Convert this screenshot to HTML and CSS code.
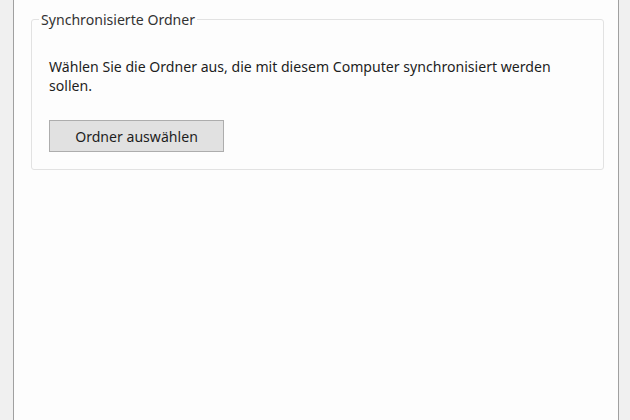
FILE: index.html
```html
<!DOCTYPE html>
<html lang="de">
<head>
<meta charset="utf-8">
<link rel="stylesheet" href="styles.css">
</head>
<body>
<div class="window">
  <div class="side side-left"></div>
  <main class="panel">
    <fieldset class="group">
      <legend class="legend">Synchronisierte Ordner</legend>
      <p class="desc">Wählen Sie die Ordner aus, die mit diesem Computer synchronisiert werden sollen.</p>
      <button class="btn" type="button">Ordner auswählen</button>
    </fieldset>
  </main>
  <div class="side side-right"></div>
</div>
</body>
</html>
```
FILE: styles.css
```css
html, body {
  margin: 0;
  padding: 0;
  height: 100%;
}
body {
  font-family: "Noto Sans", "Open Sans", sans-serif;
  font-size: 14.1px;
  color: #1e1e1e;
  background: #f0f0f0;
}
.window {
  display: flex;
  height: 420px;
}
.side {
  background: #f0f0f0;
}
.side-left {
  width: 13px;
  flex: none;
}
.side-right {
  flex: 1;
}
.panel {
  width: 606px;
  flex: none;
  box-sizing: border-box;
  background: #fdfdfd;
  border-left: 1px solid #a0a0a0;
  border-right: 1px solid #a0a0a0;
  padding: 10px 14px 0 17px;
}
.group {
  margin: 0;
  border: 1px solid #e2e2e2;
  border-radius: 3px;
  padding: 0 30px 0 17px;
  height: 160px;
  box-sizing: border-box;
}
.legend {
  padding: 0 2px;
  margin-left: -10px;
  color: #333;
}
.desc {
  margin: 28px 0 0 0;
  line-height: 19px;
  max-width: 510px;
}
.btn {
  display: block;
  margin-top: 25px;
  width: 175px;
  height: 32px;
  font: inherit;
  color: #1e1e1e;
  background: #e1e1e1;
  border: 1px solid #adadad;
  padding: 0;
}
```
